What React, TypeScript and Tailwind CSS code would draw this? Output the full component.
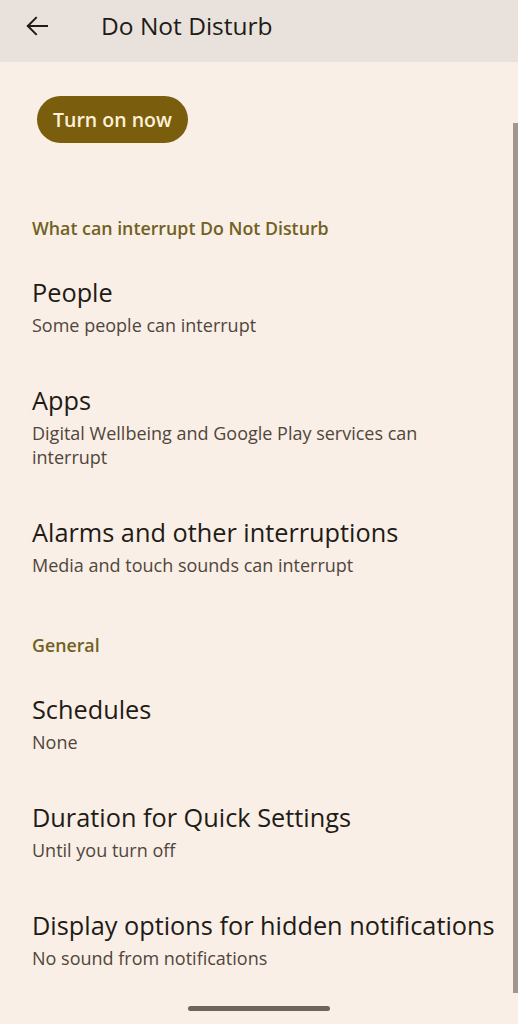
import type { ReactNode } from 'react'

interface SettingItem {
  title: string
  summary: string
}

interface SettingSection {
  label: string
  items: SettingItem[]
}

const sections: SettingSection[] = [
  {
    label: 'What can interrupt Do Not Disturb',
    items: [
      { title: 'People', summary: 'Some people can interrupt' },
      {
        title: 'Apps',
        summary: 'Digital Wellbeing and Google Play services can interrupt',
      },
      {
        title: 'Alarms and other interruptions',
        summary: 'Media and touch sounds can interrupt',
      },
    ],
  },
  {
    label: 'General',
    items: [
      { title: 'Schedules', summary: 'None' },
      { title: 'Duration for Quick Settings', summary: 'Until you turn off' },
      {
        title: 'Display options for hidden notifications',
        summary: 'No sound from notifications',
      },
    ],
  },
]

const font = { fontFamily: '"Open Sans", "Noto Sans", sans-serif' }

function BackArrow() {
  return (
    <svg width="22" height="20" viewBox="0 0 22 20" fill="none">
      <path
        d="M21 10H2M10 1.8 1.8 10l8.2 8.2"
        stroke="#1f1b16"
        strokeWidth="2"
        strokeLinecap="square"
      />
    </svg>
  )
}

function SectionLabel({ children, first }: { children: ReactNode; first?: boolean }) {
  return (
    <div
      className={`px-[32px] pb-[12px] text-[17.8px] font-semibold leading-[24px] text-[#716123] ${
        first ? 'pt-[73px]' : 'pt-[33px]'
      }`}
    >
      {children}
    </div>
  )
}

function SettingRow({ item }: { item: SettingItem }) {
  return (
    <div className="pb-[23px] pl-[32px] pr-[18px] pt-[24px]">
      <div className="text-[25.3px] leading-[32px] text-[#1f1b16]">{item.title}</div>
      <div className="mt-[5px] max-w-[430px] text-[18px] leading-[24px] text-[#50463b]">
        {item.summary}
      </div>
    </div>
  )
}

export default function App() {
  return (
    <div
      className="relative h-[1024px] w-[518px] overflow-hidden bg-[#f9efe7]"
      style={font}
    >
      {/* Top app bar */}
      <div className="flex h-[62px] items-start bg-[#e8e1dc] pt-[10px]">
        <div className="flex h-[32px] w-[101px] items-center pl-[26px]">
          <BackArrow />
        </div>
        <div className="text-[24.5px] leading-[32px] text-[#1f1b16]">Do Not Disturb</div>
      </div>

      <div className="pl-[37px] pt-[34px]">
        <button className="h-[47px] rounded-full bg-[#7b5d0e] px-[16px] text-[19.5px] font-semibold text-[#fdf1d8]">
          Turn on now
        </button>
      </div>

      {sections.map((section, i) => (
        <div key={section.label}>
          <SectionLabel first={i === 0}>{section.label}</SectionLabel>
          {section.items.map((item) => (
            <SettingRow key={item.title} item={item} />
          ))}
        </div>
      ))}

      {/* Scroll indicator */}
      <div className="absolute right-0 top-[123px] h-[870px] w-[5px] bg-[#a1978e]" />

      {/* Gesture handle */}
      <div className="absolute bottom-[13px] left-[188px] h-[5px] w-[142px] rounded-full bg-[#6d645c]" />
    </div>
  )
}
